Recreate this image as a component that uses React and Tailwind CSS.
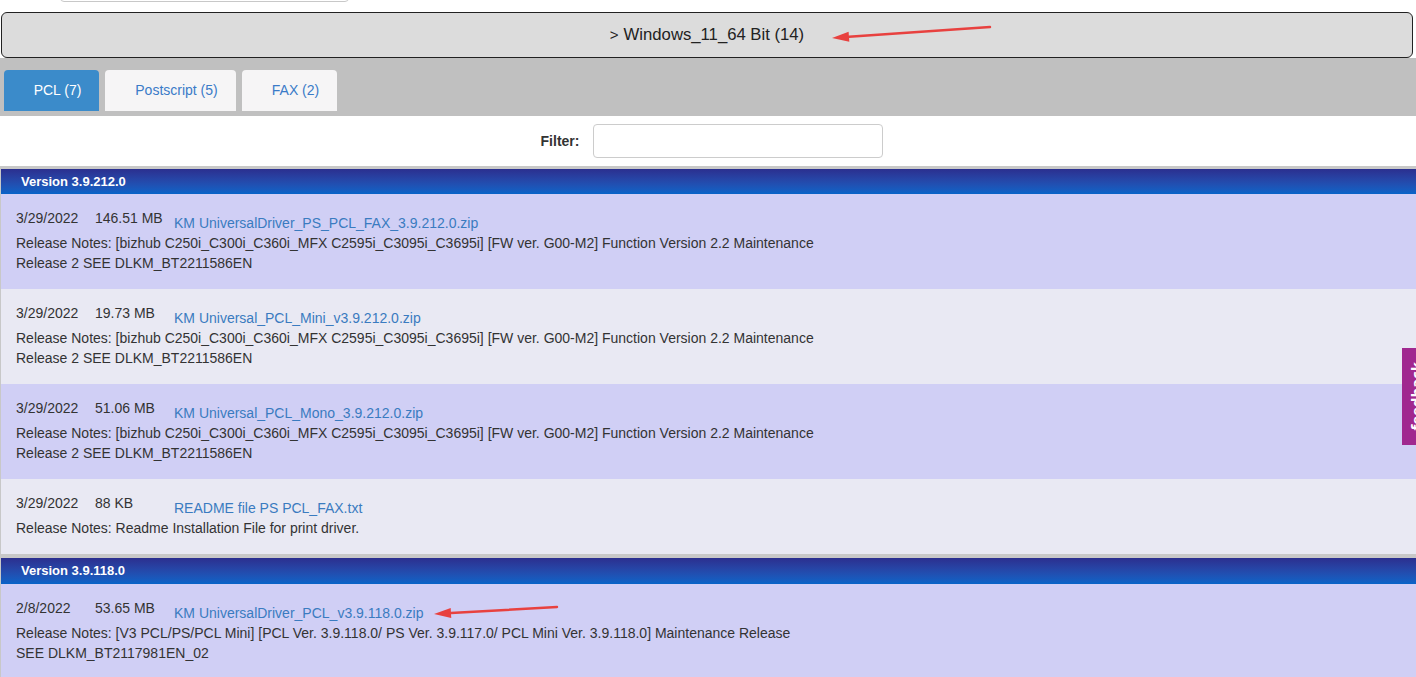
import React from 'react';

const sections = [
  {
    version: 'Version 3.9.212.0',
    first: true,
    rows: [
      {
        date: '3/29/2022',
        size: '146.51 MB',
        file: 'KM UniversalDriver_PS_PCL_FAX_3.9.212.0.zip',
        notes: [
          'Release Notes: [bizhub C250i_C300i_C360i_MFX C2595i_C3095i_C3695i] [FW ver. G00-M2] Function Version 2.2 Maintenance',
          'Release 2 SEE DLKM_BT2211586EN',
        ],
      },
      {
        date: '3/29/2022',
        size: '19.73 MB',
        file: 'KM Universal_PCL_Mini_v3.9.212.0.zip',
        notes: [
          'Release Notes: [bizhub C250i_C300i_C360i_MFX C2595i_C3095i_C3695i] [FW ver. G00-M2] Function Version 2.2 Maintenance',
          'Release 2 SEE DLKM_BT2211586EN',
        ],
      },
      {
        date: '3/29/2022',
        size: '51.06 MB',
        file: 'KM Universal_PCL_Mono_3.9.212.0.zip',
        notes: [
          'Release Notes: [bizhub C250i_C300i_C360i_MFX C2595i_C3095i_C3695i] [FW ver. G00-M2] Function Version 2.2 Maintenance',
          'Release 2 SEE DLKM_BT2211586EN',
        ],
      },
      {
        date: '3/29/2022',
        size: '88 KB',
        file: 'README file PS PCL_FAX.txt',
        notes: ['Release Notes: Readme Installation File for print driver.'],
      },
    ],
  },
  {
    version: 'Version 3.9.118.0',
    first: false,
    rows: [
      {
        date: '2/8/2022',
        size: '53.65 MB',
        file: 'KM UniversalDriver_PCL_v3.9.118.0.zip',
        notes: [
          'Release Notes: [V3 PCL/PS/PCL Mini] [PCL Ver. 3.9.118.0/ PS Ver. 3.9.117.0/ PCL Mini Ver. 3.9.118.0] Maintenance Release',
          'SEE DLKM_BT2117981EN_02',
        ],
      },
    ],
  },
];

function Arrow({ x1, y1, x2, y2 }) {
  const angle = Math.atan2(y1 - y2, x1 - x2);
  const len = 17;
  const half = 5;
  const bx = x2 + Math.cos(angle) * len;
  const by = y2 + Math.sin(angle) * len;
  const px = -Math.sin(angle) * half;
  const py = Math.cos(angle) * half;
  return (
    <g>
      <line x1={x1} y1={y1} x2={bx} y2={by} stroke="#e8413f" strokeWidth="2.5" strokeLinecap="round" />
      <polygon
        points={`${x2},${y2} ${bx + px},${by + py} ${bx - px},${by - py}`}
        fill="#e8413f"
      />
    </g>
  );
}

function FileRow({ row, shade }) {
  return (
    <div className={`pl-[15px] pr-4 pt-[14px] pb-4 ${shade ? 'bg-[#d0cff5]' : 'bg-[#e9e9f3]'}`}>
      <div className="flex items-start leading-5">
        <span className="w-[79px] shrink-0">{row.date}</span>
        <span className="w-[79px] shrink-0">{row.size}</span>
        <a className="mt-[5px] text-[#3a7bc0] cursor-pointer">{row.file}</a>
      </div>
      <div className="leading-5">
        {row.notes.map((n) => (
          <div key={n}>{n}</div>
        ))}
      </div>
    </div>
  );
}

export default function App() {
  return (
    <div
      className="relative w-[1416px] h-[677px] overflow-hidden bg-white text-[14px] text-[#333]"
      style={{ fontFamily: '"Liberation Sans", Arial, sans-serif' }}
    >
      {/* search box edge from above */}
      <div className="h-[12px] overflow-hidden">
        <div className="ml-[60px] mt-[-30px] w-[289px] h-[32px] border border-[#c8c8c8] rounded-[4px]" />
      </div>

      {/* OS accordion header */}
      <div className="ml-[1px] mr-[3px] h-[46px] border border-[#222] rounded-[6px] bg-[#dcdcdc] flex items-center justify-center text-[16.7px] text-[#222]">
        <span className="mr-[5px] text-[15px]">&gt;</span>Windows_11_64 Bit (14)
      </div>

      {/* Tabs */}
      <div className="bg-[#c0c0c0] pt-[12px] pb-[5px] px-1 flex gap-[6px]">
        <div className="w-[95px] h-[41px] rounded-t-[4px] bg-[#3b8bca] text-white flex items-center justify-center pl-[12px]">
          PCL (7)
        </div>
        <div className="w-[131px] h-[41px] rounded-t-[4px] bg-[#f6f5f6] text-[#3a7bc8] flex items-center justify-center pl-[12px]">
          Postscript (5)
        </div>
        <div className="w-[95px] h-[41px] rounded-t-[4px] bg-[#f6f5f6] text-[#3a7bc8] flex items-center justify-center pl-[12px]">
          FAX (2)
        </div>
      </div>

      {/* Filter */}
      <div className="h-[50px] flex items-center justify-center gap-[14px] pl-[8px]">
        <span className="font-bold text-[#333]">Filter:</span>
        <input className="w-[290px] h-[34px] border border-[#cccccc] rounded-[4px] bg-white outline-none" />
      </div>

      {/* Versions */}
      <div className="border-l border-[#c8c8c8]">
        {sections.map((s) => (
          <div
            key={s.version}
            className={`border-[#c8c8c8] ${s.first ? 'border-t-[3px]' : 'border-t-[4px]'}`}
          >
            <div
              className={`flex items-center pl-5 text-white font-bold text-[13px] bg-gradient-to-b from-[#2b2f8f] to-[#0564c8] ${
                s.first ? 'h-[25px]' : 'h-[26px]'
              }`}
            >
              {s.version}
            </div>
            {s.rows.map((r, i) => (
              <FileRow key={r.file} row={r} shade={i % 2 === 0} />
            ))}
          </div>
        ))}
      </div>

      {/* feedback tab */}
      <div className="absolute right-[-14px] top-[348px] w-[28px] h-[97px] bg-[#a0288f] flex items-center justify-center">
        <span className="text-white font-bold text-[15px] [writing-mode:vertical-rl] rotate-180" style={{ fontFamily: '"Open Sans", sans-serif' }}>
          feedback
        </span>
      </div>

      {/* annotation arrows */}
      <svg className="absolute inset-0 pointer-events-none" width="1416" height="677">
        <Arrow x1={990} y1={27} x2={832} y2={38} />
        <Arrow x1={557} y1={607} x2={434} y2={614} />
      </svg>
    </div>
  );
}
